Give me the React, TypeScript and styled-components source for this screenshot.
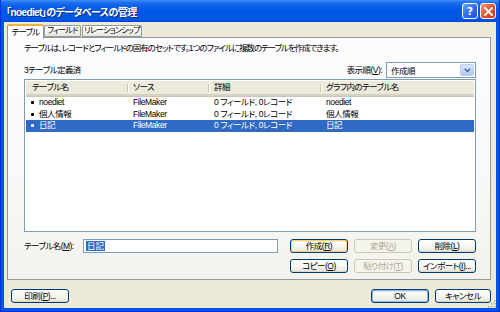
import React from "react";
import styled, { createGlobalStyle } from "styled-components";

const GlobalStyle = createGlobalStyle`
  html, body {
    margin: 0;
    padding: 0;
    background: #ffffff;
  }
  * {
    box-sizing: border-box;
  }
`;

const FONT = `"Liberation Sans", "Noto Sans CJK JP", sans-serif`;

type Table = {
  name: string;
  source: string;
  detail: string;
  graph: string;
};

const tables: Table[] = [
  { name: "noediet", source: "FileMaker", detail: "0 フィールド, 0レコード", graph: "noediet" },
  { name: "個人情報", source: "FileMaker", detail: "0 フィールド, 0レコード", graph: "個人情報" },
  { name: "日記", source: "FileMaker", detail: "0 フィールド, 0レコード", graph: "日記" },
];

const columns = ["テーブル名", "ソース", "詳細", "グラフ内のテーブル名"];

export default function App() {
  const [selected, setSelected] = React.useState(2);
  const [tab, setTab] = React.useState(0);

  return (
    <>
      <GlobalStyle />
      <Window>
        <TitleBar>
          <Title>「noediet」のデータベースの管理</Title>
          <TitleButtons>
            <HelpButton>?</HelpButton>
            <CloseButton>
              <svg width="9" height="9" viewBox="0 0 9 9">
                <path d="M1 1 L8 8 M8 1 L1 8" stroke="#fff" strokeWidth="1.8" strokeLinecap="square" />
              </svg>
            </CloseButton>
          </TitleButtons>
        </TitleBar>

        <Client>
          <Tabs>
            {["テーブル", "フィールド", "リレーションシップ"].map((t, i) => (
              <Tab key={t} $active={tab === i} $width={[37, 37, 60][i]} onClick={() => setTab(i)}>
                {t}
              </Tab>
            ))}
          </Tabs>

          <Panel>
            <Description>
              テーブルは、レコードとフィールドの固有のセットです。1つのファイルに複数のテーブルを作成できます。
            </Description>

            <ListBar>
              <Label>3テーブル定義済</Label>
              <SortGroup>
                <Label>
                  表示順(<U>V</U>):
                </Label>
                <Select>
                  <span>作成順</span>
                  <SelectArrow>
                    <svg width="7" height="5" viewBox="0 0 7 5">
                      <path d="M0.8 0.8 L3.5 3.5 L6.2 0.8" stroke="#4d6185" strokeWidth="1.4" fill="none" />
                    </svg>
                  </SelectArrow>
                </Select>
              </SortGroup>
            </ListBar>

            <List>
              <Header>
                {columns.map((c) => (
                  <HeaderCell key={c}>{c}</HeaderCell>
                ))}
              </Header>
              {tables.map((t, i) => (
                <Row key={t.name} $selected={selected === i} onClick={() => setSelected(i)}>
                  <NameCell>
                    <Bullet $selected={selected === i} />
                    {t.name}
                  </NameCell>
                  <Cell>{t.source}</Cell>
                  <Cell>{t.detail}</Cell>
                  <Cell>{t.graph}</Cell>
                </Row>
              ))}
            </List>

            <Controls>
              <NameField>
                <Label>
                  テーブル名(<U>M</U>):
                </Label>
                <Input>
                  <Selection>{tables[selected].name}</Selection>
                </Input>
              </NameField>
              <Button $kind="focus">
                作成(<U>R</U>)
              </Button>
              <Button $kind="disabled">
                変更(<U>A</U>)
              </Button>
              <Button>
                削除(<U>L</U>)
              </Button>
              <span />
              <Button>
                コピー(<U>O</U>)
              </Button>
              <Button $kind="disabled">
                貼り付け(<U>T</U>)
              </Button>
              <Button>
                インポート(<U>I</U>)...
              </Button>
            </Controls>
          </Panel>

          <Footer>
            <Button>
              印刷(<U>P</U>)...
            </Button>
            <FooterRight>
              <Button $kind="default">OK</Button>
              <Button $width={56}>キャンセル</Button>
            </FooterRight>
          </Footer>

          <Grip>
            <svg width="10" height="10" viewBox="0 0 10 10">
              {[
                [8, 2], [8, 5], [5, 5], [8, 8], [5, 8], [2, 8],
              ].map(([x, y]) => (
                <rect key={`${x}-${y}`} x={x} y={y} width="1.5" height="1.5" fill="#b3ae9c" />
              ))}
            </svg>
          </Grip>
        </Client>
      </Window>
    </>
  );
}

const Window = styled.div`
  width: 500px;
  height: 312px;
  display: flex;
  flex-direction: column;
  background: #0055e5;
  border-left: 1px solid #0831d9;
  border-right: 1px solid #0831d9;
  border-bottom: 1px solid #0831d9;
  font-family: ${FONT};
  font-feature-settings: "palt";
`;

const TitleBar = styled.div`
  height: 22px;
  flex: none;
  display: flex;
  align-items: center;
  justify-content: space-between;
  padding: 0 3px 0 5px;
  background: linear-gradient(
    180deg,
    #3d8ff7 0%,
    #1f6ff0 12%,
    #0a5ee8 30%,
    #0055e5 55%,
    #0058e8 85%,
    #0048d6 100%
  );
`;

const Title = styled.div`
  color: #ffffff;
  font-size: 10px;
  font-weight: 700;
  letter-spacing: -0.6px;
  text-shadow: 1px 1px 0 #0a2a8c;
`;

const TitleButtons = styled.div`
  display: flex;
  gap: 2px;
`;

const TitleButton = styled.div`
  width: 16px;
  height: 16px;
  border: 1px solid #ffffff;
  border-radius: 3px;
  display: flex;
  align-items: center;
  justify-content: center;
  color: #ffffff;
`;

const HelpButton = styled(TitleButton)`
  background: linear-gradient(135deg, #6ea5fb 0%, #2d6ff0 50%, #1b56d8 100%);
  font-family: "DejaVu Sans", sans-serif;
  font-weight: 700;
  font-size: 11px;
  line-height: 1;
`;

const CloseButton = styled(TitleButton)`
  background: linear-gradient(135deg, #f09a7b 0%, #e2562f 50%, #c93c1c 100%);
`;

const Client = styled.div`
  position: relative;
  flex: 1;
  margin: 0 3px 3px 3px;
  background: #ece9d8;
  display: flex;
  flex-direction: column;
  padding: 2px 5px 0 3px;
`;

const Tabs = styled.div`
  height: 13px;
  display: flex;
  align-items: flex-end;
  position: relative;
  z-index: 1;
`;

const Tab = styled.div<{ $active: boolean; $width: number }>`
  width: ${(p) => p.$width}px;
  height: ${(p) => (p.$active ? 15 : 12)}px;
  margin-bottom: ${(p) => (p.$active ? -2 : 0)}px;
  margin-right: ${(p) => (p.$active ? 0 : 1)}px;
  display: flex;
  align-items: center;
  justify-content: center;
  white-space: nowrap;
  font-size: ${(p) => (p.$active ? 8.5 : 8)}px;
  line-height: 10px;
  letter-spacing: -0.8px;
  color: #000000;
  border: 1px solid #919b9c;
  border-bottom: ${(p) => (p.$active ? "none" : "1px solid #919b9c")};
  border-top: ${(p) => (p.$active ? "2px solid #f7b03c" : "1px solid #919b9c")};
  border-radius: 2px 2px 0 0;
  background: ${(p) =>
    p.$active ? "#fcfcfe" : "linear-gradient(180deg, #ffffff 0%, #f3f3ef 60%, #e6e5dd 100%)"};
  padding: 0 0 ${(p) => (p.$active ? 2 : 0)}px 0;
  cursor: default;
`;

const Panel = styled.div`
  height: 243px;
  flex: none;
  border: 1px solid #919b9c;
  background: linear-gradient(180deg, #fcfcfe 0%, #f8f8f6 60%, #f3f2ec 100%);
  padding: 4px 14px 0 16px;
  display: flex;
  flex-direction: column;
`;

const Text = styled.div`
  font-size: 8.5px;
  line-height: 12px;
  letter-spacing: -0.55px;
  color: #000000;
  white-space: nowrap;
`;

const Description = styled(Text)`
  letter-spacing: -1.05px;
`;

const Label = styled(Text)``;

const U = styled.span`
  text-decoration: underline;
`;

const ListBar = styled.div`
  margin-top: 8px;
  height: 16px;
  display: flex;
  align-items: center;
  justify-content: space-between;
`;

const SortGroup = styled.div`
  display: flex;
  align-items: center;
  gap: 4px;
`;

const Select = styled.div`
  width: 90px;
  height: 16px;
  border: 1px solid #7f9db9;
  background: #ffffff;
  display: flex;
  align-items: center;
  justify-content: space-between;
  padding: 0 1px 0 4px;
  font-size: 8.5px;
  letter-spacing: -0.55px;
`;

const SelectArrow = styled.div`
  width: 14px;
  height: 12px;
  border: 1px solid #bacdf6;
  border-radius: 2px;
  background: linear-gradient(180deg, #dde8fd 0%, #c4d6fb 50%, #b1c8f7 100%);
  display: flex;
  align-items: center;
  justify-content: center;
`;

const List = styled.div`
  margin-top: 1px;
  height: 153px;
  border: 1px solid #7f9db9;
  background: #ffffff;
  padding: 1px;
`;

const grid = `
  display: grid;
  grid-template-columns: 101px 81px 112px 1fr;
`;

const Header = styled.div`
  ${grid};
  height: 15px;
  background: #ebeadb;
  border-bottom: 2px solid #d6d2c2;
  box-shadow: 0 1px 0 #cbc7b8;
  margin-bottom: 1px;
`;

const HeaderCell = styled(Text)`
  position: relative;
  padding-left: 6px;
  line-height: 13px;
  & + &::before {
    content: "";
    position: absolute;
    left: 0;
    top: 3px;
    bottom: 2px;
    width: 1px;
    background: #c7c5b2;
    box-shadow: 1px 0 0 #ffffff;
  }
`;

const Row = styled.div<{ $selected: boolean }>`
  ${grid};
  height: 11.5px;
  background: ${(p) => (p.$selected ? "#316ac5" : "transparent")};
  color: ${(p) => (p.$selected ? "#ffffff" : "#000000")};
  cursor: default;
`;

const Cell = styled.div`
  padding-left: 6px;
  font-size: 8.5px;
  line-height: 11.5px;
  letter-spacing: -0.4px;
  white-space: nowrap;
  overflow: hidden;
`;

const NameCell = styled(Cell)`
  display: flex;
  align-items: center;
  gap: 5px;
  padding-left: 5px;
`;

const Bullet = styled.span<{ $selected: boolean }>`
  width: 3px;
  height: 3px;
  border-radius: 1px;
  background: ${(p) => (p.$selected ? "#ffffff" : "#000000")};
`;

const Controls = styled.div`
  margin-top: 7px;
  display: grid;
  grid-template-columns: 260px 58px 58px 58px;
  column-gap: 6px;
  row-gap: 6px;
`;

const NameField = styled.div`
  display: flex;
  align-items: center;
  justify-content: space-between;
  padding-right: 6px;
`;

const Input = styled.div`
  width: 195px;
  height: 14px;
  border: 1px solid #7f9db9;
  background: #ffffff;
  display: flex;
  align-items: center;
  padding-left: 2px;
`;

const Selection = styled.span`
  background: #316ac5;
  color: #ffffff;
  font-size: 8.5px;
  line-height: 10px;
  padding: 0 1px;
`;

const Button = styled.button<{ $kind?: "normal" | "focus" | "default" | "disabled"; $width?: number }>`
  width: ${(p) => p.$width ?? 58}px;
  height: 14px;
  padding: 0;
  border: 1px solid ${(p) => (p.$kind === "disabled" ? "#c9c7ba" : "#003c74")};
  border-radius: 3px;
  font-family: ${FONT};
  font-feature-settings: "palt";
  font-size: 8.5px;
  letter-spacing: -0.5px;
  line-height: 12px;
  color: ${(p) => (p.$kind === "disabled" ? "#aca899" : "#000000")};
  background: ${(p) =>
    p.$kind === "disabled"
      ? "#f5f4ea"
      : "linear-gradient(180deg, #ffffff 0%, #f7f7f4 45%, #ecebe5 85%, #d6d0c5 100%)"};
  box-shadow: ${(p) =>
    p.$kind === "focus"
      ? "inset 0 0 0 1px #fbd27a, inset 0 1px 0 1px #ffefc8"
      : p.$kind === "default"
      ? "inset 0 0 0 1px #9bb9ec, inset 0 1px 0 1px #cee7ff"
      : "none"};
  cursor: default;
`;

const Footer = styled.div`
  margin-top: 9px;
  display: flex;
  justify-content: space-between;
  padding-left: 4px;
`;

const FooterRight = styled.div`
  display: flex;
  gap: 6px;
`;

const Grip = styled.div`
  position: absolute;
  right: 0;
  bottom: 0;
  width: 10px;
  height: 10px;
  line-height: 0;
`;
